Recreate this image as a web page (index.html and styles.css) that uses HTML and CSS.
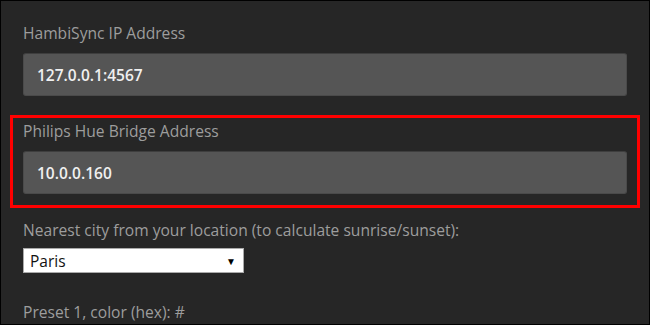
FILE: index.html
```html
<!DOCTYPE html>
<html lang="en">
    <head>
        <meta charset="UTF-8">
        <title>HambiSync Settings</title>
        <link rel="stylesheet" href="styles.css">
    </head>
    <body>
        <form class="settings">
            <div class="field">
                <label class="field-label" for="hambiIp">HambiSync IP Address</label>
                <input class="text-input" type="text" id="hambiIp" value="127.0.0.1:4567">
            </div>
            <div class="field field-highlight">
                <label class="field-label" for="bridgeIp">Philips Hue Bridge Address</label>
                <input class="text-input" type="text" id="bridgeIp" value="10.0.0.160">
            </div>
            <div class="field field-city">
                <label class="field-label" for="city">Nearest city from your location (to calculate sunrise/sunset):</label>
                <div class="select-box">
                    <span class="select-value">Paris</span>
                    <span class="select-arrow">&#9660;</span>
                </div>
            </div>
            <div class="field field-preset">
                <label class="field-label">Preset 1, color (hex): #</label>
            </div>
        </form>
    </body>
</html>
```

FILE: styles.css
```css
html, body {
    margin: 0;
    padding: 0;
}

body {
    width: 650px;
    height: 325px;
    box-sizing: border-box;
    border: 1px solid #000;
    background: #262626;
    overflow: hidden;
    font-family: "Open Sans", "Liberation Sans", sans-serif;
}

.settings {
    padding: 22px 22px 0 22px;
}

.field {
    display: flex;
    flex-direction: column;
    margin-bottom: 25px;
}

.field-label {
    font-size: 15.6px;
    line-height: 20px;
    color: #9d9d9d;
    margin-bottom: 10px;
}

.text-input {
    height: 43px;
    box-sizing: border-box;
    padding: 0 13px;
    border: 1px solid #4a4a4a;
    border-top-color: #3e3e3e;
    border-radius: 3px;
    background: #555;
    color: #f0f0f0;
    font-family: "Open Sans", "Liberation Sans", sans-serif;
    font-size: 15.5px;
    font-weight: 600;
    outline: none;
}

.field-highlight {
    margin: -6px -13px 12px -13px;
    padding: 3px 10px 11px 10px;
    border: 3px solid #ff0000;
}

.field-city .field-label {
    margin-bottom: 8px;
}

.field-city {
    margin-bottom: 29px;
}

.field-preset {
    margin-bottom: 0;
}

.select-box {
    width: 221px;
    height: 25px;
    box-sizing: border-box;
    display: flex;
    align-items: center;
    justify-content: space-between;
    padding: 0 7px 0 6px;
    background: #fff;
    border: 1px solid #aaa;
    font-size: 15.5px;
    color: #111;
}

.select-arrow {
    font-size: 10px;
    color: #000;
}
```
